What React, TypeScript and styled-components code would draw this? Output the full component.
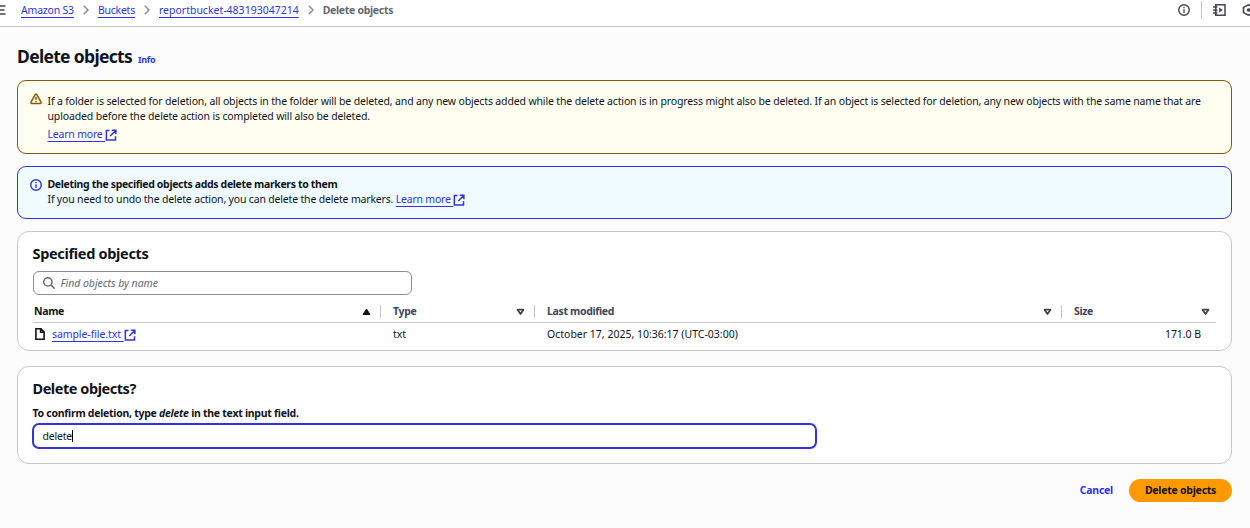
import React from 'react';
import styled, { createGlobalStyle } from 'styled-components';

const blue = '#2f34dc';
const ink = '#0f141a';
const muted = '#424650';

const GlobalStyle = createGlobalStyle`
  * { box-sizing: border-box; }
  body {
    margin: 0;
    background: #fcfcfd;
    color: ${ink};
    font: 400 10.5px/15px "Noto Sans", "Open Sans", sans-serif;
    letter-spacing: -0.17px;
    overflow: hidden;
  }
  svg { display: block; flex: none; }
`;

const Page = styled.div`
  width: 1250px;
  height: 528px;
  overflow: hidden;
`;

const TopBar = styled.header`
  display: flex;
  align-items: center;
  height: 27px;
  padding-bottom: 6px;
  background: #fff;
  border-bottom: 1px solid #c6c6cd;
`;

const MenuIcon = styled.svg`
  margin-right: 15px;
`;

const Crumbs = styled.nav`
  display: flex;
  align-items: center;
  flex: 1;
`;

const Link = styled.a<{ $spacing?: number }>`
  color: ${blue};
  text-decoration: underline;
  text-decoration-thickness: 1px;
  text-underline-offset: 3px;
  text-decoration-skip-ink: none;
  white-space: pre;
  letter-spacing: ${(p) => p.$spacing ?? -0.17}px;
  cursor: pointer;
`;

const Chevron = styled.svg`
  margin: 0 9px;
`;

const CurrentCrumb = styled.span`
  color: #656871;
  font-weight: 700;
  letter-spacing: -0.31px;
`;

const Tools = styled.div`
  display: flex;
  align-items: center;
`;

const ToolDivider = styled.span`
  width: 1px;
  height: 18px;
  margin: 0 11px 0 11px;
  background: #c6c6cd;
`;

const ClippedTool = styled.span`
  width: 8px;
  margin-left: 16px;
  overflow: hidden;
`;

const Main = styled.main`
  padding: 17px 18px 0 17px;
`;

const TitleRow = styled.div`
  display: flex;
  align-items: baseline;
  height: 36px;
`;

const Title = styled.h1`
  margin: 0;
  font-size: 17.5px;
  line-height: 24px;
  font-weight: 700;
  letter-spacing: -0.68px;
`;

const Info = styled.a`
  margin-left: 6px;
  color: ${blue};
  font-size: 9px;
  font-weight: 700;
  letter-spacing: -0.3px;
`;

const Alert = styled.section<{ $tone: 'warning' | 'info' }>`
  display: flex;
  gap: 5.5px;
  height: ${(p) => (p.$tone === 'warning' ? 74 : 53)}px;
  margin-bottom: 12px;
  padding: ${(p) => (p.$tone === 'warning' ? 13 : 10)}px 12px 0;
  border: 1px solid ${(p) => (p.$tone === 'warning' ? '#855900' : blue)};
  border-radius: 9px;
  background: ${(p) => (p.$tone === 'warning' ? '#fffef0' : '#f0fbff')};
`;

const AlertIcon = styled.svg<{ $top: number }>`
  margin-top: ${(p) => p.$top}px;
`;

const AlertBody = styled.div`
  white-space: nowrap;
`;

const AlertLine = styled.div<{ $spacing: number }>`
  letter-spacing: ${(p) => p.$spacing}px;
`;

const AlertTitle = styled.div`
  font-weight: 700;
  letter-spacing: -0.34px;
`;

const AlertAction = styled.div`
  display: flex;
  margin-top: 3px;
`;

const InlineRow = styled.div`
  display: flex;
`;

const ExternalLinkIcon = styled.svg`
  margin-top: 2px;
`;

const Card = styled.section<{ $height: number; $gap: number }>`
  height: ${(p) => p.$height}px;
  margin-bottom: ${(p) => p.$gap}px;
  padding: 11px 15px 0;
  border: 1px solid #c6c6cd;
  border-radius: 12px;
  background: #fff;
`;

const CardTitle = styled.h2<{ $spacing: number }>`
  margin: 0 0 0 -0.5px;
  font-size: 14.5px;
  line-height: 20px;
  font-weight: 700;
  letter-spacing: ${(p) => p.$spacing}px;
`;

const SearchBox = styled.div`
  display: flex;
  align-items: center;
  gap: 6px;
  width: 379px;
  height: 24px;
  margin-top: 8px;
  padding: 0 8.5px;
  border: 1px solid #8c8c94;
  border-radius: 6px;
  color: #656871;
  font-style: italic;
  letter-spacing: -0.03px;
`;

const Table = styled.div`
  display: grid;
  grid-template-columns: 348px 154px 527px 154px;
  margin-top: 5px;
`;

const HeadCell = styled.div<{ $first?: boolean; $last?: boolean }>`
  display: flex;
  align-items: center;
  justify-content: space-between;
  height: 23px;
  padding: 1px ${(p) => (p.$last ? 6.5 : 0)}px 0 ${(p) => (p.$first ? 1 : 12)}px;
  border-bottom: 1px solid #c6c6cd;
  color: ${(p) => (p.$first ? ink : muted)};
  font-weight: 700;
  letter-spacing: -0.34px;
`;

const SortGroup = styled.span`
  display: flex;
  align-items: center;
  gap: 9.5px;
`;

const ColumnDivider = styled.span`
  width: 1px;
  height: 13px;
  background: #c6c6cd;
`;

const Cell = styled.div<{ $first?: boolean; $right?: boolean; $spacing?: number }>`
  display: flex;
  height: 23px;
  padding: 4px 15px 0 ${(p) => (p.$first ? 2 : 12)}px;
  justify-content: ${(p) => (p.$right ? 'flex-end' : 'flex-start')};
  letter-spacing: ${(p) => p.$spacing ?? -0.1}px;
`;

const FileIcon = styled.svg`
  margin: 1px 7px 0 0;
`;

const Label = styled.label`
  display: block;
  margin: 8px 0 2px -0.5px;
  font-weight: 700;
  letter-spacing: -0.27px;
`;

const ConfirmField = styled.div`
  display: flex;
  align-items: center;
  width: 785px;
  height: 26px;
  margin-left: -1px;
  padding-left: 8.5px;
  border: 2px solid ${blue};
  border-radius: 7px;
  letter-spacing: -0.2px;
`;

const Caret = styled.span`
  width: 1px;
  height: 12px;
  background: #000;
`;

const Actions = styled.footer`
  display: flex;
  align-items: center;
  justify-content: flex-end;
`;

const Button = styled.button<{ $primary?: boolean }>`
  height: 23px;
  padding: 0 ${(p) => (p.$primary ? 0 : 16)}px;
  width: ${(p) => (p.$primary ? '103px' : 'auto')};
  border: 0;
  border-radius: 12px;
  background: ${(p) => (p.$primary ? '#ff9900' : 'transparent')};
  color: ${(p) => (p.$primary ? ink : blue)};
  font: inherit;
  font-weight: 700;
  letter-spacing: -0.25px;
`;

const InfoCircle = ({ color }: { color: string }) => (
  <>
    <circle cx="8" cy="8" r="7" fill="none" stroke={color} strokeWidth="1.9" />
    <path d="M8 12V7M8 5.8V4" fill="none" stroke={color} strokeWidth="1.8" />
  </>
);

const External = () => (
  <ExternalLinkIcon width="12" height="12" viewBox="0 0 16 16" fill="none" stroke={blue} strokeWidth="2">
    <path d="M14 9.5V14.5H1.8V2H6M9 1.8h5.5V7M7 9.3l7-7" />
  </ExternalLinkIcon>
);

const Separator = () => (
  <Chevron width="6" height="10" viewBox="0 0 6 10" fill="none" stroke="#8c8c94" strokeWidth="1.5">
    <path d="M.8.7 5 5 .8 9.3" />
  </Chevron>
);

const Sort = ({ active }: { active?: boolean }) => (
  <svg width="9" height="8" viewBox="0 0 9 8">
    {active ? (
      <path d="M4.5 1 8 6.5H1Z" fill={ink} stroke={ink} strokeLinejoin="round" />
    ) : (
      <path d="M1.5 1.7h6L4.5 6Z" fill="none" stroke={muted} strokeWidth="1.8" strokeLinejoin="round" />
    )}
  </svg>
);

const HeaderColumn = ({ name, first, last }: { name: string; first?: boolean; last?: boolean }) => (
  <HeadCell $first={first} $last={last}>
    {name}
    <SortGroup>
      <Sort active={first} />
      {!last && <ColumnDivider />}
    </SortGroup>
  </HeadCell>
);

export default function App() {
  return (
    <Page>
      <GlobalStyle />
      <TopBar>
        <MenuIcon width="6" height="10" viewBox="0 0 6 10" stroke={muted} strokeWidth="1.5">
          <path d="M0 1h5.5M0 5h4.5M0 9h5.5" />
        </MenuIcon>
        <Crumbs>
          <Link $spacing={-0.2}>Amazon S3</Link>
          <Separator />
          <Link $spacing={-0.24}>Buckets</Link>
          <Separator />
          <Link $spacing={0}>reportbucket-483193047214</Link>
          <Separator />
          <CurrentCrumb>Delete objects</CurrentCrumb>
        </Crumbs>
        <Tools>
          <svg width="12" height="12" viewBox="0 0 16 16"><InfoCircle color={muted} /></svg>
          <ToolDivider />
          <svg width="13" height="12" viewBox="0 0 13 12" fill="none" stroke={muted} strokeWidth="1.5">
            <path d="M2.8.8h9.2v10.4H2.8zM0 3h4.4M0 6h4.4M0 9h4.4" />
            <path d="M6.2 3.6 9.8 6 6.2 8.4Z" fill={muted} stroke="none" />
          </svg>
          <ClippedTool>
            <svg width="13" height="12" viewBox="0 0 13 12" fill="none" stroke={muted} strokeWidth="1.6">
              <path d="M6.5.8 11.5 3.4v5.2L6.5 11.2 1.5 8.6V3.4Z" />
              <circle cx="6.5" cy="6" r="1.8" fill={muted} stroke="none" />
            </svg>
          </ClippedTool>
        </Tools>
      </TopBar>
      <Main>
        <TitleRow>
          <Title>Delete objects</Title>
          <Info>Info</Info>
        </TitleRow>
        <Alert $tone="warning">
          <AlertIcon $top={-1} width="12" height="12" viewBox="0 0 16 16" fill="none" stroke="#855900" strokeWidth="2">
            <path d="M7 1.8Q8 .6 9 1.8L14.6 12.3Q15 14 13.6 14H2.4Q1 14 1.4 12.3Z" strokeLinejoin="round" />
            <path d="M8 5v4M8 10.2v2" />
          </AlertIcon>
          <AlertBody>
            <AlertLine $spacing={-0.148}>
              If a folder is selected for deletion, all objects in the folder will be deleted, and any new objects added while the delete action is in progress might also be deleted. If an object is selected for deletion, any new objects with the same name that are
            </AlertLine>
            <AlertLine $spacing={-0.148}>
              uploaded before the delete action is completed will also be deleted.
            </AlertLine>
            <AlertAction>
              <Link $spacing={-0.2}>{'Learn more '}</Link>
              <External />
            </AlertAction>
          </AlertBody>
        </Alert>
        <Alert $tone="info">
          <AlertIcon $top={2} width="12" height="12" viewBox="0 0 16 16"><InfoCircle color={blue} /></AlertIcon>
          <AlertBody>
            <AlertTitle>Deleting the specified objects adds delete markers to them</AlertTitle>
            <InlineRow>
              <AlertLine $spacing={-0.176}>
                If you need to undo the delete action, you can delete the delete markers.&nbsp;
              </AlertLine>
              <Link $spacing={-0.22}>{'Learn more '}</Link>
              <External />
            </InlineRow>
          </AlertBody>
        </Alert>
        <Card $height={120} $gap={15}>
          <CardTitle $spacing={-0.32}>Specified objects</CardTitle>
          <SearchBox>
            <svg width="12" height="12" viewBox="0 0 16 16" fill="none" stroke="#656871" strokeWidth="2">
              <circle cx="6.5" cy="6.5" r="5.5" />
              <path d="m10.5 10.5 5 5" />
            </svg>
            Find objects by name
          </SearchBox>
          <Table>
            <HeaderColumn name="Name" first />
            <HeaderColumn name="Type" />
            <HeaderColumn name="Last modified" />
            <HeaderColumn name="Size" last />
            <Cell $first>
              <FileIcon width="10" height="12" viewBox="0 0 10 12" fill="none" stroke={ink} strokeWidth="1.6">
                <path d="M.9.8H6l3.1 3.1v7.3H.9ZM5.6.8v3.5h3.5" />
              </FileIcon>
              <Link $spacing={-0.08}>{'sample-file.txt '}</Link>
              <External />
            </Cell>
            <Cell $spacing={0}>txt</Cell>
            <Cell $spacing={0}>October 17, 2025, 10:36:17 (UTC-03:00)</Cell>
            <Cell $right $spacing={-0.05}>171.0 B</Cell>
          </Table>
        </Card>
        <Card $height={98} $gap={15}>
          <CardTitle $spacing={-0.45}>Delete objects?</CardTitle>
          <Label>To confirm deletion, type <i>delete</i> in the text input field.</Label>
          <ConfirmField>delete<Caret /></ConfirmField>
        </Card>
        <Actions>
          <Button>Cancel</Button>
          <Button $primary>Delete objects</Button>
        </Actions>
      </Main>
    </Page>
  );
}
